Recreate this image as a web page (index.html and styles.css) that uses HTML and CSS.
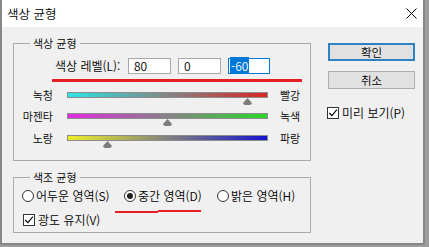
FILE: index.html
```html
<!DOCTYPE html>
<html lang="ko">
<head>
<meta charset="utf-8">
<title>색상 균형</title>
<link rel="stylesheet" href="styles.css">
</head>
<body>
<div class="window">
  <div class="titlebar">
    <span class="title">색상 균형</span>
    <svg class="close" width="11" height="11" viewBox="0 0 11 11"><path d="M0.5 0.5 L10.5 10.5 M10.5 0.5 L0.5 10.5" stroke="#000" stroke-width="1"/></svg>
  </div>
  <div class="content">
    <div class="main">
      <fieldset class="group group-balance">
        <legend>색상 균형</legend>
        <div class="levels">
          <span class="levels-label">색상 레벨(L):</span>
          <span class="field">80</span>
          <span class="field">0</span>
          <span class="field field-focus"><span class="selected">-60</span></span>
        </div>
        <div class="mark mark-levels"></div>
        <div class="sliders">
          <div class="slider">
            <span class="slider-left">녹청</span>
            <div class="track"><div class="bar bar-cr"></div><svg class="thumb" style="left:90%" width="9" height="7" viewBox="0 0 9 7"><path d="M4.5 0 L8.6 4.4 Q9.2 7 6.6 7 L2.4 7 Q-0.2 7 0.4 4.4 Z" fill="#7d7d7d"/></svg></div>
            <span class="slider-right">빨강</span>
          </div>
          <div class="slider">
            <span class="slider-left">마젠타</span>
            <div class="track"><div class="bar bar-mg"></div><svg class="thumb" style="left:50%" width="9" height="7" viewBox="0 0 9 7"><path d="M4.5 0 L8.6 4.4 Q9.2 7 6.6 7 L2.4 7 Q-0.2 7 0.4 4.4 Z" fill="#7d7d7d"/></svg></div>
            <span class="slider-right">녹색</span>
          </div>
          <div class="slider">
            <span class="slider-left">노랑</span>
            <div class="track"><div class="bar bar-yb"></div><svg class="thumb" style="left:20%" width="9" height="7" viewBox="0 0 9 7"><path d="M4.5 0 L8.6 4.4 Q9.2 7 6.6 7 L2.4 7 Q-0.2 7 0.4 4.4 Z" fill="#7d7d7d"/></svg></div>
            <span class="slider-right">파랑</span>
          </div>
        </div>
      </fieldset>
      <fieldset class="group group-tone">
        <legend>색조 균형</legend>
        <div class="radios">
          <span class="radio radio-shadows"><span class="radio-dot"></span>어두운 영역(S)</span>
          <span class="radio radio-midtones"><span class="radio-dot radio-checked"></span>중간 영역(D)</span>
          <span class="radio"><span class="radio-dot"></span>밝은 영역(H)</span>
        </div>
        <span class="check check-luminosity"><span class="box"><svg width="10" height="10" viewBox="0 0 10 10"><path d="M1.3 5 L3.9 7.7 L8.9 1.6" fill="none" stroke="#000" stroke-width="1.1"/></svg></span>광도 유지(V)</span>
      </fieldset>
    </div>
    <div class="side">
      <div class="button button-default">확인</div>
      <div class="button">취소</div>
      <span class="check check-preview"><span class="box"><svg width="10" height="10" viewBox="0 0 10 10"><path d="M1.3 5 L3.9 7.7 L8.9 1.6" fill="none" stroke="#000" stroke-width="1.1"/></svg></span>미리 보기(P)</span>
    </div>
  </div>
</div>
</body>
</html>
```
FILE: styles.css
```css
* { box-sizing: border-box; }
html, body { margin: 0; padding: 0; }
body {
  width: 429px;
  height: 247px;
  overflow: hidden;
  background: #9d9d9d;
  font-family: "Noto Sans CJK KR", "Noto Sans", sans-serif;
  font-size: 12px;
  font-weight: 350;
  color: #000;
}
.window {
  width: 425px;
  height: 245px;
  background: #f0f0f0;
  border: 2px solid #878787;
  border-top: 0;
  display: flex;
  flex-direction: column;
}
.titlebar {
  flex: none;
  height: 27px;
  background: #fff;
  display: flex;
  align-items: center;
  justify-content: space-between;
  padding: 0 6px 0 5px;
}
.title { font-size: 12.5px; line-height: 16px; }
.close { display: block; }
.content {
  flex: 1;
  display: flex;
  padding: 9px 0 0 11px;
}
.main { width: 298px; display: flex; flex-direction: column; }
.group {
  margin: 0;
  padding: 0;
  min-width: 0;
  border: 1px solid #ababab;
}
.group legend {
  margin-left: 16px;
  padding: 0 3px;
  font-size: 11px;
  line-height: 14px;
}
.group-balance { padding-bottom: 10px; }
.levels {
  display: flex;
  align-items: center;
  height: 16px;
  margin: 8px 0 0 41px;
}
.levels-label { width: 73px; line-height: 14px; }
.field {
  width: 43px;
  height: 16px;
  margin-right: 7px;
  padding-left: 5px;
  background: #fff;
  border: 1px solid #a9a9a9;
  line-height: 14px;
}
.field-focus {
  width: 42px;
  margin-right: 0;
  padding-left: 1px;
  border-color: #0078d7;
}
.selected { background: #0078d7; color: #fff; padding: 0 1px; }
.mark { background: #e31e24; }
.mark-levels { height: 3px; width: 250px; margin: 5px 0 0 38px; }
.sliders { margin-top: 4px; }
.slider { display: flex; align-items: flex-start; height: 21px; }
.slider:nth-child(2) { height: 22px; }
.slider-left {
  width: 39px;
  margin-top: 2px;
  text-align: right;
  font-size: 11px;
  line-height: 14px;
}
.slider-right { margin-top: 2px; font-size: 11px; line-height: 14px; }
.track {
  position: relative;
  width: 201px;
  height: 13px;
  margin: 6px 12px 0 14px;
}
.bar { height: 6px; border: 1px solid #8c8c8c; }
.bar-cr { background: linear-gradient(to right, #2ce4e4, #db2525); }
.bar-mg { background: linear-gradient(to right, #e52ae5, #27d927); }
.bar-yb { background: linear-gradient(to right, #eeee2a, #1313cf); }
.thumb { position: absolute; top: 6px; margin-left: -4.5px; display: block; }
.group-tone { margin-top: 9px; padding-bottom: 4px; }
.radios {
  display: flex;
  align-items: center;
  height: 16px;
  margin: 4px 0 0 8px;
}
.radio { position: relative; display: flex; align-items: center; line-height: 16px; }
.radio-shadows { width: 102px; }
.radio-midtones { width: 93px; }
.radio-midtones::before,
.radio-midtones::after {
  content: "";
  position: absolute;
  height: 2px;
  width: 43px;
  background: #e31e24;
}
.radio-midtones::before { left: -9px; top: 23px; }
.radio-midtones::after { left: 34px; top: 22px; }
.radio-dot {
  width: 12px;
  height: 12px;
  margin-right: 2px;
  border: 1px solid #333;
  border-radius: 50%;
  background: #fff;
  display: flex;
  align-items: center;
  justify-content: center;
}
.radio-checked::after {
  content: "";
  width: 6px;
  height: 6px;
  border-radius: 50%;
  background: #222;
}
.check { display: flex; align-items: center; line-height: 16px; }
.box {
  width: 12px;
  height: 12px;
  margin-right: 3px;
  border: 1px solid #333;
  background: #fff;
  display: flex;
}
.box svg { display: block; }
.check-luminosity { margin: 8px 0 0 9px; }
.side {
  width: 87px;
  margin-left: 17px;
  padding-top: 7px;
  display: flex;
  flex-direction: column;
}
.button {
  height: 18px;
  border: 1px solid #adadad;
  background: #e1e1e1;
  text-align: center;
  font-size: 11.5px;
  line-height: 16px;
}
.button-default { border: 2px solid #3180c0; line-height: 14px; }
.button + .button { margin-top: 10px; }
.check-preview { margin-top: 16px; margin-left: -1px; }
```
